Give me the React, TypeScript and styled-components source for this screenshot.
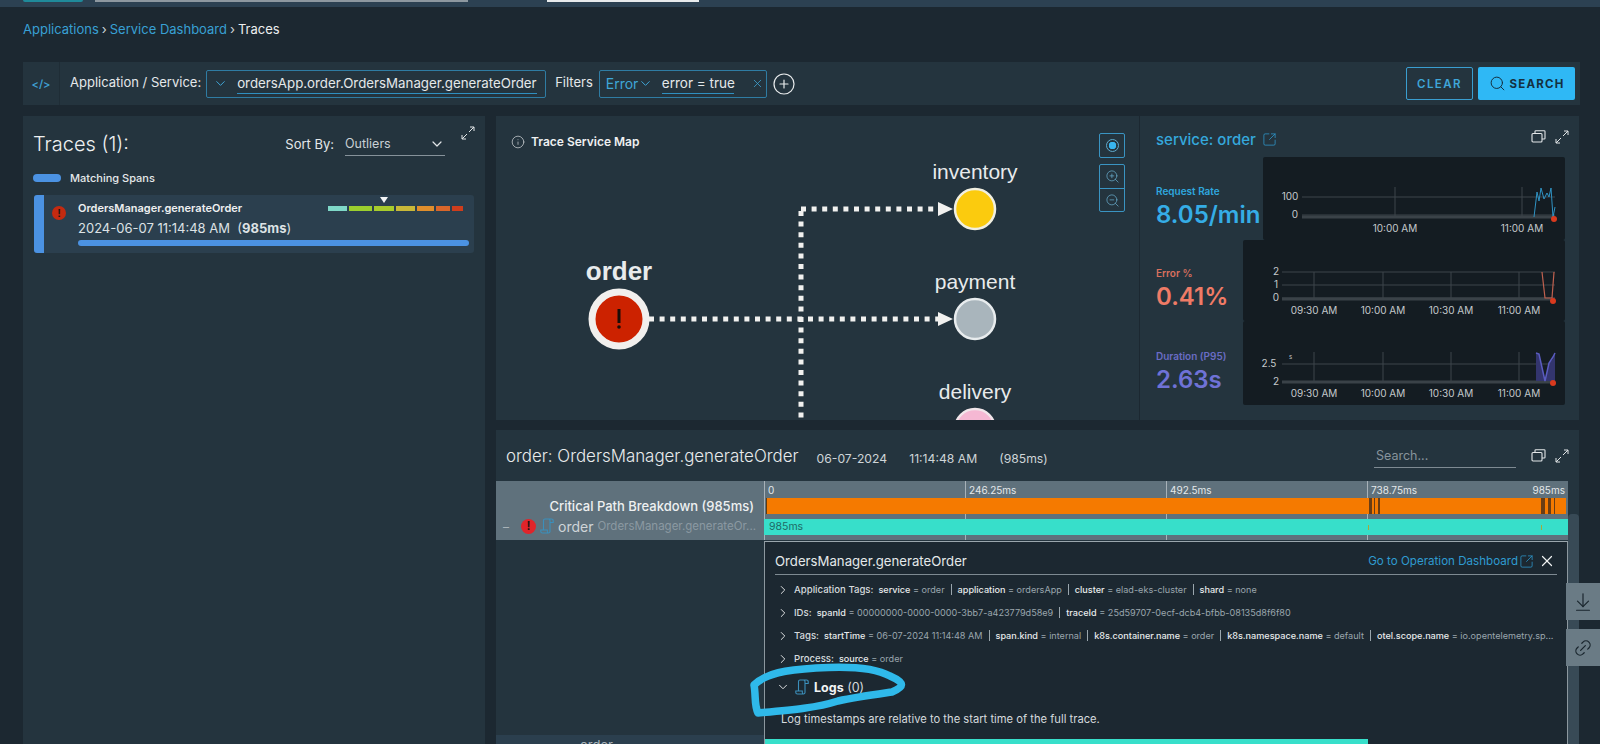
import React from "react";
import styled, { createGlobalStyle } from "styled-components";
import {
  ArrowDownToLine,
  ChevronDown,
  ChevronRight,
  CirclePlus,
  Info,
  Link2,
  Search,
  SquareArrowOutUpRight,
  X,
  ZoomIn,
  ZoomOut,
} from "lucide-react";

const heatSegments = [
  { width: 19, color: "#7fd8c8" },
  { width: 23, color: "#9ccf2e" },
  { width: 20, color: "#a8cc2c" },
  { width: 19, color: "#c9b838" },
  { width: 17, color: "#e08e2c" },
  { width: 14, color: "#d9662a" },
  { width: 11, color: "#cf3d1c" },
];

const detailRows = [
  {
    label: "Application Tags:",
    tags: [
      ["service", "order"],
      ["application", "ordersApp"],
      ["cluster", "elad-eks-cluster"],
      ["shard", "none"],
    ],
  },
  {
    label: "IDs:",
    tags: [
      ["spanId", "00000000-0000-0000-3bb7-a423779d58e9"],
      ["traceId", "25d59707-0ecf-dcb4-bfbb-08135d8f6f80"],
    ],
  },
  {
    label: "Tags:",
    tags: [
      ["startTime", "06-07-2024 11:14:48 AM"],
      ["span.kind", "internal"],
      ["k8s.container.name", "order"],
      ["k8s.namespace.name", "default"],
      ["otel.scope.name", "io.opentelemetry.sp..."],
    ],
  },
  { label: "Process:", tags: [["source", "order"]] },
];

const orangeStripes = [
  { left: 602, width: 3 },
  { left: 607, width: 1 },
  { left: 611, width: 2 },
  { left: 774, width: 4 },
  { left: 781, width: 3 },
  { left: 787, width: 1 },
];

type ChartProps = {
  width: number;
  height: number;
  ticks: { label: string; labelX: number; y: number }[];
  lineFrom: number;
  lineTo: number;
  axisY: number;
  gridTop: number;
  columns: { x: number; label: string }[];
  labelY: number;
  dot: { x: number; y: number };
  children: React.ReactNode;
};

const TimeChart = ({ width, height, ticks, lineFrom, lineTo, axisY, gridTop, columns, labelY, dot, children }: ChartProps) => (
  <ChartBox $width={width} $height={height}>
    <svg width={width} height={height}>
      {columns.map((c) => (
        <g key={c.label}>
          <line x1={c.x} x2={c.x} y1={gridTop} y2={axisY} stroke="#3c454b" />
          <text x={c.x} y={labelY + 4} fill="#c4c9cc" fontSize="10" textAnchor="middle" fontFamily="Inter, sans-serif">
            {c.label}
          </text>
        </g>
      ))}
      {ticks.map((t) => (
        <g key={t.label}>
          <line x1={lineFrom} x2={lineTo} y1={t.y} y2={t.y} stroke="#3c454b" />
          <text x={t.labelX} y={t.y + 3} fill="#c4c9cc" fontSize="10" textAnchor="middle" fontFamily="Inter, sans-serif">
            {t.label}
          </text>
        </g>
      ))}
      <line x1={lineFrom} x2={lineTo} y1={axisY} y2={axisY} stroke="#3a4248" strokeWidth="3" />
      {children}
      <circle cx={dot.x} cy={dot.y} r="3" fill="#d93a1e" />
    </svg>
  </ChartBox>
);

const halfHours = [
  { x: 71, label: "09:30 AM" },
  { x: 140, label: "10:00 AM" },
  { x: 208, label: "10:30 AM" },
  { x: 276, label: "11:00 AM" },
];

const ExpandIcon = () => (
  <svg width="14" height="14" viewBox="0 0 14 14" fill="none" stroke="#e2e6e8" strokeWidth="1">
    <path d="M8 6l5-5M9 1h4v4M6 8l-5 5M1 9v4h4" />
  </svg>
);

const RestoreIcon = () => (
  <svg width="15" height="13" viewBox="0 0 15 13" fill="none" stroke="#e2e6e8" strokeWidth="1.1">
    <rect x="1" y="3.5" width="10" height="8.5" rx="1" />
    <path d="M4 3.5V1.5a.8.8 0 0 1 .8-.8h8.4a.8.8 0 0 1 .8.8v6.7a.8.8 0 0 1-.8.8H11" />
  </svg>
);

const ScrollIcon = () => (
  <svg width="14" height="16" viewBox="0 0 14 16" fill="none" stroke="#3b8fbb" strokeWidth="1.1">
    <path d="M3.5 12V2.5A1.5 1.5 0 0 1 5 1H11.5A1.7 1.7 0 0 1 13.2 2.7V4.5H10M8.3 1A1.7 1.7 0 0 1 10 2.7V13.4A1.6 1.6 0 0 1 8.4 15H2.4A1.6 1.6 0 0 1 .8 13.4V12H7.3V13.4A1.6 1.6 0 0 0 8.4 15" />
  </svg>
);

const ServiceMap = () => (
  <svg width="644" height="304" style={{ display: "block" }}>
    <g fill="none" stroke="#f1f1ef" strokeWidth="5" strokeDasharray="5 5.6">
      <path d="M305 93H444" />
      <path d="M305 95V304" />
      <path d="M153 203H444" />
    </g>
    <path d="M442 86l15 7-15 7z M442 196l15 7-15 7z" fill="#f1f1ef" />
    <circle cx="123" cy="203" r="27" fill="#cc2200" stroke="#f1efed" strokeWidth="7" />
    <path d="M123 193v14" stroke="#1a0d08" strokeWidth="3" />
    <circle cx="123" cy="211" r="1.8" fill="#1a0d08" />
    <circle cx="479" cy="93" r="20" fill="#fbcb0e" stroke="#f1efe0" strokeWidth="2.5" />
    <circle cx="479" cy="203" r="20" fill="#a9b5bc" stroke="#e8ecee" strokeWidth="2.5" />
    <circle cx="479" cy="313" r="20" fill="#f5b8d3" stroke="#f1e6ea" strokeWidth="2.5" />
    <g fontFamily="'Liberation Sans', sans-serif" textAnchor="middle" fill="#e8ebec" fontSize="21">
      <text x="123" y="164" fontSize="26" fontWeight="700">order</text>
      <text x="479" y="63">inventory</text>
      <text x="479" y="173">payment</text>
      <text x="479" y="283">delivery</text>
    </g>
  </svg>
);

const App = () => {
  return (
    <Page>
      <GlobalStyle />
      <TopBar>
        <TopTeal />
        <TopGray />
        <TopOutline />
      </TopBar>
      <Main>
        <Breadcrumb>
          <Crumb>Applications</Crumb>
          <Sep>›</Sep>
          <Crumb>Service Dashboard</Crumb>
          <Sep>›</Sep>
          <CurrentCrumb>Traces</CurrentCrumb>
        </Breadcrumb>

        <FilterBar>
          <CodeCell>&lt;/&gt;</CodeCell>
          <FieldLabel>Application / Service:</FieldLabel>
          <ServiceSelect>
            <ChevronDown size={15} color="#3fa6d8" strokeWidth={1.6} />
            <UnderlinedValue>ordersApp.order.OrdersManager.generateOrder</UnderlinedValue>
          </ServiceSelect>
          <FiltersLabel>Filters</FiltersLabel>
          <FilterChip>
            <ChipKey>
              Error
              <ChevronDown size={15} color="#3fa6d8" strokeWidth={1.6} />
            </ChipKey>
            <ChipValue>error = true</ChipValue>
            <X size={13} color="#3fa6d8" strokeWidth={1.4} />
          </FilterChip>
          <AddFilter>
            <CirclePlus size={24} color="#e8ebec" strokeWidth={1.2} />
          </AddFilter>
          <ClearButton>CLEAR</ClearButton>
          <SearchButton>
            <Search size={17} color="#14303f" strokeWidth={1.4} />
            SEARCH
          </SearchButton>
        </FilterBar>

        <Columns>
          <TracesPanel>
            <TracesHeader>
              <TracesTitle>Traces (1):</TracesTitle>
              <SortLabel>Sort By:</SortLabel>
              <SortSelect>
                Outliers
                <ChevronDown size={16} color="#e2e6e8" strokeWidth={1.8} />
              </SortSelect>
              <ExpandSlot>
                <ExpandIcon />
              </ExpandSlot>
            </TracesHeader>
            <Legend>
              <LegendPill />
              Matching Spans
            </Legend>
            <TraceCard>
              <CardAccent />
              <ErrorDot $size={14} $color="#c42a10">!</ErrorDot>
              <CardBody>
                <CardTop>
                  <SpanName>OrdersManager.generateOrder</SpanName>
                  <HeatStrip>
                    <HeatMarker />
                    {heatSegments.map((s) => (
                      <HeatSegment key={s.color} $width={s.width} $color={s.color} />
                    ))}
                  </HeatStrip>
                </CardTop>
                <SpanTime>
                  2024-06-07 11:14:48 AM&nbsp; (<b>985ms</b>)
                </SpanTime>
                <SpanBar />
              </CardBody>
            </TraceCard>
          </TracesPanel>

          <RightColumn>
            <TopPanel>
              <MapPane>
                <MapTitle>
                  <Info size={14} color="#d5dadd" strokeWidth={1.2} />
                  Trace Service Map
                </MapTitle>
                <MapControls>
                  <ControlGroup>
                    <ControlButton>
                      <CenterRing />
                    </ControlButton>
                  </ControlGroup>
                  <ControlGroup>
                    <ControlButton>
                      <ZoomIn size={15} color="#6db4d6" strokeWidth={1.1} />
                    </ControlButton>
                    <ControlButton>
                      <ZoomOut size={15} color="#6db4d6" strokeWidth={1.1} />
                    </ControlButton>
                  </ControlGroup>
                </MapControls>
                <ServiceMap />
              </MapPane>
              <ServicePane>
                <ServiceHeader>
                  <ServiceName>
                    service: order
                    <SquareArrowOutUpRight size={15} color="#2f9bd0" strokeWidth={1.2} />
                  </ServiceName>
                  <WindowIcons>
                    <RestoreIcon />
                    <ExpandIcon />
                  </WindowIcons>
                </ServiceHeader>
                <MetricRow>
                  <MetricText $top={27}>
                    <MetricLabel $color="#2fa7de">Request Rate</MetricLabel>
                    <MetricValue $color="#35ade6">8.05/min</MetricValue>
                  </MetricText>
                  <TimeChart
                    width={302}
                    height={83}
                    ticks={[{ label: "100", labelX: 27, y: 40 }, { label: "0", labelX: 32, y: 58 }]}
                    lineFrom={39}
                    lineTo={292}
                    axisY={60}
                    gridTop={30}
                    columns={[{ x: 132, label: "10:00 AM" }, { x: 259, label: "11:00 AM" }]}
                    labelY={71}
                    dot={{ x: 291, y: 62 }}
                  >
                    <path
                      d="M271 60L274 35 276 44 278 31 281 42 284 36 286 40 288 31 290 60 292 50"
                      fill="none"
                      stroke="#2f93c4"
                      strokeWidth="1"
                    />
                  </TimeChart>
                </MetricRow>
                <MetricRow>
                  <MetricText $top={26}>
                    <MetricLabel $color="#d9705e">Error %</MetricLabel>
                    <MetricValue $color="#ef7b66">0.41%</MetricValue>
                  </MetricText>
                  <TimeChart
                    width={322}
                    height={81}
                    ticks={[
                      { label: "2", labelX: 33, y: 32 },
                      { label: "1", labelX: 33, y: 45 },
                      { label: "0", labelX: 33, y: 58 },
                    ]}
                    lineFrom={39}
                    lineTo={312}
                    axisY={59}
                    gridTop={32}
                    columns={halfHours}
                    labelY={70}
                    dot={{ x: 310, y: 61 }}
                  >
                    <path d="M299 32L302 58H309L311 32" fill="none" stroke="#c0614f" strokeWidth="1.2" />
                  </TimeChart>
                </MetricRow>
                <MetricRow>
                  <MetricText $top={28}>
                    <MetricLabel $color="#6a6cc4">Duration (P95)</MetricLabel>
                    <MetricValue $color="#6f72d6">2.63s</MetricValue>
                  </MetricText>
                  <TimeChart
                    width={322}
                    height={84}
                    ticks={[{ label: "2.5", labelX: 26, y: 43 }]}
                    lineFrom={39}
                    lineTo={312}
                    axisY={61}
                    gridTop={31}
                    columns={halfHours}
                    labelY={72}
                    dot={{ x: 310, y: 62 }}
                  >
                    <text x="33" y="64" fill="#c4c9cc" fontSize="10" textAnchor="middle" fontFamily="Inter, sans-serif">2</text>
                    <text x="46" y="38" fill="#c4c9cc" fontSize="6" fontFamily="Inter, sans-serif">s</text>
                    <path d="M293 32L296 33 302 60 306 42 310 38 312 31V60H293z" fill="#33356e" />
                    <path d="M293 32L296 33 302 60 306 42 310 36 312 32" fill="none" stroke="#5a5cc0" strokeWidth="1.5" />
                  </TimeChart>
                </MetricRow>
              </ServicePane>
            </TopPanel>

            <BottomPanel>
              <SpanHeader>
                <SpanTitle>order: OrdersManager.generateOrder</SpanTitle>
                <SpanStamp $gap={18}>06-07-2024</SpanStamp>
                <SpanStamp $gap={22}>11:14:48 AM</SpanStamp>
                <SpanStamp $gap={22}>(985ms)</SpanStamp>
                <SpanSearch>Search...</SpanSearch>
                <WindowIcons>
                  <RestoreIcon />
                  <ExpandIcon />
                </WindowIcons>
              </SpanHeader>

              <TableWrap>
                <SpanTable>
                  <OverviewLabels>
                    <CriticalLabel>Critical Path Breakdown (985ms)</CriticalLabel>
                    <ServiceRow>
                      <Dash>–</Dash>
                      <ErrorDot $size={15} $color="#e0242a">!</ErrorDot>
                      <ScrollIcon />
                      <RowService>order</RowService>
                      <RowOperation>OrdersManager.generateOr...</RowOperation>
                    </ServiceRow>
                  </OverviewLabels>

                  <Timeline>
                    <Ruler>
                      <RulerCell>0</RulerCell>
                      <RulerCell>246.25ms</RulerCell>
                      <RulerCell>492.5ms</RulerCell>
                      <RulerCell>
                        <span>738.75ms</span>
                        <span>985ms</span>
                      </RulerCell>
                    </Ruler>
                    <OrangeBar>
                      {orangeStripes.map((s) => (
                        <OrangeStripe key={s.left} style={{ left: s.left, width: s.width }} />
                      ))}
                    </OrangeBar>
                    <TealBar>
                      985ms
                      <TealMark $left={604} />
                      <TealMark $left={777} />
                    </TealBar>
                  </Timeline>

                  <TreeGap />

                  <DetailPanel>
                    <DetailHeader>
                      <DetailTitle>OrdersManager.generateOrder</DetailTitle>
                      <OperationLink>
                        Go to Operation Dashboard
                        <SquareArrowOutUpRight size={15} color="#2f9bd0" strokeWidth={1.2} />
                      </OperationLink>
                      <X size={18} color="#f0f2f3" strokeWidth={1.6} />
                    </DetailHeader>
                    {detailRows.map((row) => (
                      <TagRow key={row.label}>
                        <ChevronRight size={14} color="#e8ebec" strokeWidth={1.6} />
                        <TagLabel>{row.label}</TagLabel>
                        {row.tags.map(([k, v], i) => (
                          <TagItem key={k} $first={i === 0}>
                            <b>{k}</b> = <span>{v}</span>
                          </TagItem>
                        ))}
                      </TagRow>
                    ))}
                    <LogsRow>
                      <ChevronDown size={14} color="#e8ebec" strokeWidth={1.6} />
                      <ScrollIcon />
                      <LogsTitle>
                        <b>Logs</b> (0)
                      </LogsTitle>
                    </LogsRow>
                    <LogNote>Log timestamps are relative to the start time of the full trace.</LogNote>
                    <Scribble width="170" height="60" viewBox="0 0 170 60" fill="none">
                      <path
                        d="M8 24C20 12 40 9 70 7C100 5 128 6 144 15C160 22 158 26 146 31C125 34 110 36 92 40C70 47 45 49 12 52C8 44 10 34 8 24Z"
                        stroke="#2fb9ea"
                        strokeWidth="7.5"
                        strokeLinejoin="round"
                      />
                    </Scribble>
                  </DetailPanel>

                  <NextLabel>
                    <NextText>order</NextText>
                  </NextLabel>
                  <NextTrack>
                    <NextBar />
                  </NextTrack>
                </SpanTable>
                <ScrollGutter>
                  <ScrollThumb />
                </ScrollGutter>
              </TableWrap>
            </BottomPanel>
          </RightColumn>
        </Columns>
      </Main>

      <SideButton $top={583}>
        <ArrowDownToLine size={22} color="#1a262e" strokeWidth={1.3} />
      </SideButton>
      <SideButton $top={629}>
        <Link2 size={20} color="#1a262e" strokeWidth={1.5} style={{ transform: "rotate(-45deg)" }} />
      </SideButton>
    </Page>
  );
};

const GlobalStyle = createGlobalStyle`
  html, body {
    margin: 0;
    padding: 0;
    background: #1c2831;
  }
  * {
    box-sizing: border-box;
  }
  svg {
    flex: none;
  }
`;

const Page = styled.div`
  position: relative;
  width: 1600px;
  height: 744px;
  overflow: hidden;
  background: #1c2831;
  color: #e4e8ea;
  font-family: Inter, "Noto Sans", sans-serif;
`;

const TopBar = styled.div`
  height: 7px;
  background: #2c4152;
  display: flex;
  padding-left: 23px;
`;

const TopTeal = styled.div`
  width: 60px;
  height: 2px;
  background: #1f8a9a;
  border-radius: 0 0 2px 2px;
`;

const TopGray = styled.div`
  width: 373px;
  height: 2px;
  margin-left: 12px;
  background: #8d98a0;
`;

const TopOutline = styled.div`
  width: 152px;
  height: 2px;
  margin-left: 79px;
  background: #e8ebec;
`;

const Main = styled.div`
  padding: 0 21px 0 23px;
`;

const Breadcrumb = styled.div`
  height: 55px;
  padding-bottom: 11px;
  display: flex;
  align-items: center;
  gap: 3px;
  font-size: 13px;
`;

const Crumb = styled.span`
  color: #38a0d4;
`;

const Sep = styled.span`
  color: #cfd5d8;
`;

const CurrentCrumb = styled.span`
  color: #eceff0;
`;

const FilterBar = styled.div`
  height: 43px;
  margin-right: -1px;
  background: #24343e;
  display: flex;
  align-items: center;
  padding-right: 5px;
`;

const CodeCell = styled.div`
  width: 37px;
  height: 100%;
  border-right: 1px solid #1f2d36;
  display: flex;
  align-items: center;
  justify-content: center;
  color: #3f9fd0;
  font-size: 11px;
  font-weight: 600;
`;

const FieldLabel = styled.span`
  margin-left: 10px;
  font-size: 13px;
  margin-bottom: 4px;
`;

const ServiceSelect = styled.div`
  flex: none;
  width: 340px;
  height: 28px;
  margin-left: 5px;
  border: 1px solid #2f7ca3;
  border-radius: 2px;
  display: flex;
  align-items: center;
  gap: 9px;
  padding-left: 6px;
`;

const UnderlinedValue = styled.span`
  font-size: 13.3px;
  line-height: 19px;
  border-bottom: 1px solid #2f8fc0;
  white-space: nowrap;
`;

const FiltersLabel = styled.span`
  margin-left: 9px;
  font-size: 13px;
  margin-bottom: 4px;
`;

const FilterChip = styled.div`
  flex: none;
  width: 168px;
  height: 28px;
  margin-left: 6px;
  border: 1px solid #2f7ca3;
  border-radius: 2px;
  display: flex;
  align-items: center;
  padding-left: 6px;
`;

const ChipKey = styled.span`
  width: 56px;
  display: flex;
  align-items: center;
  color: #3fa6d8;
  font-size: 14px;
`;

const ChipValue = styled.span`
  width: 72px;
  margin-right: 17px;
  font-size: 13.5px;
  line-height: 19px;
  white-space: nowrap;
  border-bottom: 1px solid #2f8fc0;
`;

const AddFilter = styled.span`
  margin-left: 5px;
  display: flex;
`;

const ClearButton = styled.button`
  width: 67px;
  height: 33px;
  margin-left: auto;
  background: transparent;
  border: 1px solid #3a9ed0;
  border-radius: 2px;
  color: #3fa6d8;
  font-family: inherit;
  font-size: 11.5px;
  font-weight: 600;
  letter-spacing: 1.4px;
`;

const SearchButton = styled.button`
  width: 97px;
  height: 33px;
  margin-left: 5px;
  background: #2fb8f5;
  border: none;
  border-radius: 2px;
  color: #14303f;
  font-family: inherit;
  font-size: 11.5px;
  font-weight: 700;
  letter-spacing: 1.2px;
  display: flex;
  align-items: center;
  justify-content: center;
  gap: 4px;
`;

const Columns = styled.div`
  display: grid;
  grid-template-columns: 462px 1083px;
  gap: 11px;
  margin-top: 11px;
`;

const TracesPanel = styled.div`
  height: 628px;
  padding: 0 11px 0 10px;
  background: #24343e;
`;

const TracesHeader = styled.div`
  height: 56px;
  display: flex;
  align-items: center;
`;

const TracesTitle = styled.h2`
  margin: 0;
  font-size: 20px;
  font-weight: 300;
  color: #eef0f1;
`;

const SortLabel = styled.span`
  margin-left: auto;
  font-size: 13px;
`;

const SortSelect = styled.div`
  width: 100px;
  height: 24px;
  margin-left: 11px;
  margin-right: 16px;
  border-bottom: 1px solid #86929a;
  display: flex;
  align-items: center;
  justify-content: space-between;
  font-size: 12.5px;
  color: #c9d0d4;
`;

const ExpandSlot = styled.span`
  align-self: flex-start;
  margin-top: 10px;
  margin-right: -1px;
  display: flex;
`;

const Legend = styled.div`
  height: 12px;
  display: flex;
  align-items: center;
  gap: 9px;
  font-size: 11px;
  font-weight: 500;
`;

const LegendPill = styled.span`
  width: 28px;
  height: 8px;
  border-radius: 4px;
  background: #4b92e2;
`;

const TraceCard = styled.div`
  height: 58px;
  margin: 11px 0 0 1px;
  background: #2b3f4e;
  border-radius: 3px;
  display: flex;
`;

const CardAccent = styled.div`
  width: 10px;
  background: #4b92e2;
  border-radius: 3px 0 0 3px;
`;

const ErrorDot = styled.span<{ $size: number; $color: string }>`
  flex: none;
  width: ${(props) => props.$size}px;
  height: ${(props) => props.$size}px;
  border-radius: 50%;
  background: ${(props) => props.$color};
  color: #1c1512;
  font-family: "Liberation Sans", sans-serif;
  font-size: ${(props) => props.$size - 3}px;
  font-weight: 700;
  line-height: ${(props) => props.$size}px;
  text-align: center;
  ${TraceCard} & {
    margin: 11px 12px 0 8px;
  }
`;

const CardBody = styled.div`
  flex: 1;
  padding: 6px 5px 0 0;
`;

const CardTop = styled.div`
  height: 14px;
  padding-right: 6px;
  display: flex;
  align-items: center;
  justify-content: space-between;
`;

const SpanName = styled.span`
  font-size: 11px;
  font-weight: 600;
  color: #eef0f1;
`;

const HeatStrip = styled.div`
  position: relative;
  display: flex;
  gap: 2px;
`;

const HeatSegment = styled.span<{ $width: number; $color: string }>`
  width: ${(props) => props.$width}px;
  height: 5px;
  background: ${(props) => props.$color};
`;

const HeatMarker = styled.span`
  position: absolute;
  left: 52px;
  top: -9px;
  border-left: 4px solid transparent;
  border-right: 4px solid transparent;
  border-top: 6px solid #f2f4f5;
`;

const SpanTime = styled.div`
  height: 18px;
  margin-top: 4px;
  font-size: 13px;
  line-height: 18px;
  color: #dde2e5;
  b {
    font-weight: 700;
  }
`;

const SpanBar = styled.div`
  height: 6px;
  margin-top: 3px;
  border-radius: 3px;
  background: #4b92e2;
`;

const RightColumn = styled.div`
  display: flex;
  flex-direction: column;
  gap: 10px;
`;

const TopPanel = styled.div`
  height: 304px;
  background: #24343e;
  display: flex;
  overflow: hidden;
`;

const MapPane = styled.div`
  position: relative;
  width: 644px;
  flex: none;
  border-right: 1px solid #1c2831;
`;

const MapTitle = styled.div`
  position: absolute;
  left: 15px;
  top: 18px;
  display: flex;
  align-items: center;
  gap: 6px;
  font-size: 12px;
  font-weight: 600;
  color: #eef0f1;
`;

const MapControls = styled.div`
  position: absolute;
  left: 603px;
  top: 17px;
  display: flex;
  flex-direction: column;
  gap: 6px;
`;

const ControlGroup = styled.div`
  width: 26px;
  border: 1px solid #3a94c2;
  border-radius: 2px;
`;

const ControlButton = styled.div`
  height: 23px;
  display: flex;
  align-items: center;
  justify-content: center;
  & + & {
    border-top: 1px solid #3a94c2;
  }
`;

const CenterRing = styled.span`
  width: 13px;
  height: 13px;
  border: 1px solid #5fa9cc;
  border-radius: 50%;
  background: radial-gradient(circle, #38b4ee 0 3.5px, transparent 4px);
`;

const ServicePane = styled.div`
  flex: 1;
  padding: 0 10px 0 16px;
`;

const ServiceHeader = styled.div`
  height: 41px;
  padding-top: 14px;
  display: flex;
  justify-content: space-between;
`;

const ServiceName = styled.div`
  height: 18px;
  display: flex;
  align-items: center;
  gap: 6px;
  color: #35a8dc;
  font-size: 15px;
  font-weight: 500;
`;

const WindowIcons = styled.div`
  display: flex;
  align-items: center;
  gap: 9px;
  height: 13px;
`;

const MetricRow = styled.div`
  display: flex;
  justify-content: space-between;
  margin-right: 4px;
`;

const MetricText = styled.div<{ $top: number }>`
  padding-top: ${(props) => props.$top}px;
  white-space: nowrap;
`;

const MetricLabel = styled.div<{ $color: string }>`
  height: 14px;
  font-size: 10px;
  line-height: 14px;
  font-weight: 600;
  color: ${(props) => props.$color};
`;

const MetricValue = styled.div<{ $color: string }>`
  font-size: 24px;
  line-height: 33px;
  font-weight: 600;
  color: ${(props) => props.$color};
`;

const ChartBox = styled.div<{ $width: number; $height: number }>`
  flex: none;
  width: ${(props) => props.$width}px;
  height: ${(props) => props.$height}px;
  background: #141c22;
  border-radius: 2px;
  svg {
    display: block;
  }
`;

const BottomPanel = styled.div`
  height: 314px;
  background: #24343e;
  overflow: hidden;
`;

const SpanHeader = styled.div`
  height: 51px;
  padding: 0 10px;
  display: flex;
  align-items: center;
`;

const SpanTitle = styled.span`
  font-size: 16.9px;
  font-weight: 300;
  color: #e8ebec;
`;

const SpanStamp = styled.span<{ $gap: number }>`
  margin: 5px 0 0 ${(props) => props.$gap}px;
  font-size: 12.2px;
  color: #cfd5d8;
`;

const SpanSearch = styled.div`
  width: 142px;
  height: 24px;
  margin: 0 15px 0 auto;
  border-bottom: 1px solid #7e8a92;
  font-size: 12.5px;
  line-height: 24px;
  color: #87939b;
  padding-left: 2px;
`;

const TableWrap = styled.div`
  display: flex;
`;

const SpanTable = styled.div`
  width: 1072px;
  flex: none;
  display: grid;
  grid-template-columns: 268px 804px;
  grid-template-rows: 59px 195px 9px;
`;

const OverviewLabels = styled.div`
  background: #5f717c;
  padding-top: 16px;
`;

const CriticalLabel = styled.div`
  height: 18px;
  padding-right: 10px;
  text-align: right;
  font-size: 13px;
  line-height: 18px;
  font-weight: 500;
  color: #eef0f1;
`;

const ServiceRow = styled.div`
  height: 18px;
  margin-top: 2px;
  padding-left: 7px;
  display: flex;
  align-items: center;
  white-space: nowrap;
  gap: 4px;
`;

const Dash = styled.span`
  width: 13px;
  margin-right: 1px;
  color: #a9b3b9;
  font-size: 12px;
`;

const RowService = styled.span`
  font-size: 14px;
  color: #cfd5d8;
`;

const RowOperation = styled.span`
  font-size: 11.5px;
  color: #8b99a2;
`;

const Timeline = styled.div`
  background-color: #5f717c;
  background-image: linear-gradient(to right, #a7b1b8 1px, transparent 1px);
  background-size: 25% 100%;
`;

const Ruler = styled.div`
  height: 17px;
  display: grid;
  grid-template-columns: repeat(4, 1fr);
`;

const RulerCell = styled.div`
  padding: 3px 3px 0 4px;
  display: flex;
  justify-content: space-between;
  font-size: 10px;
  line-height: 13px;
  color: #e4e8ea;
`;

const OrangeBar = styled.div`
  position: relative;
  height: 16px;
  margin-left: 2px;
  width: 800px;
  background: #f57a00;
  border-left: 1px solid #5f3a12;
`;

const OrangeStripe = styled.span`
  position: absolute;
  top: 0;
  bottom: 0;
  background: #6a3d14;
`;

const TealBar = styled.div`
  position: relative;
  height: 16px;
  margin-top: 5px;
  padding-left: 5px;
  background: #37dfca;
  font-size: 10.5px;
  line-height: 16px;
  color: #1f6a66;
`;

const TealMark = styled.span<{ $left: number }>`
  position: absolute;
  left: ${(props) => props.$left}px;
  top: 6px;
  width: 1px;
  height: 5px;
  background: #a8a83a;
`;

const TreeGap = styled.div`
  background: #24343e;
`;

const DetailPanel = styled.div`
  position: relative;
  margin-top: 1px;
  padding: 0 10px 0 10px;
  background: #1c2831;
  border-top: 1px solid #9aa6ad;
  border-left: 1px solid #8c989f;
  border-right: 1px solid #8c989f;
`;

const DetailHeader = styled.div`
  height: 33px;
  padding: 6px 1px 0 0;
  border-bottom: 1px solid #7e8a92;
  display: flex;
  align-items: center;
`;

const DetailTitle = styled.span`
  font-size: 13.2px;
  color: #e4e8ea;
`;

const OperationLink = styled.span`
  margin-left: auto;
  margin-right: 4px;
  display: flex;
  align-items: center;
  gap: 1px;
  font-size: 11.6px;
  color: #2f9bd0;
`;

const TagRow = styled.div`
  height: 23px;
  padding-left: 1px;
  display: flex;
  align-items: center;
  font-size: 9.6px;
  white-space: nowrap;
  color: #9aa6ad;
  &:nth-of-type(2) {
    margin-top: 3px;
  }
  & > svg {
    margin-right: 4px;
  }
`;

const TagLabel = styled.span`
  margin-right: 5px;
  color: #d5dadd;
  font-weight: 500;
`;

const TagItem = styled.span<{ $first: boolean }>`
  font-size: 9.1px;
  ${(props) =>
    props.$first
      ? ""
      : `
    margin-left: 6px;
    padding-left: 6px;
    border-left: 1px solid #9aa6ad;
  `}
  b {
    font-weight: 500;
    color: #e8ebec;
  }
`;

const LogsRow = styled.div`
  height: 32px;
  margin-top: 1px;
  padding-left: 1px;
  display: flex;
  align-items: center;
  gap: 5px;
`;

const LogsTitle = styled.span`
  font-size: 12.5px;
  color: #d5dadd;
  b {
    font-weight: 700;
    color: #f2f4f5;
  }
`;

const LogNote = styled.div`
  height: 18px;
  margin-top: 7px;
  padding-left: 6px;
  font-size: 11.2px;
  line-height: 18px;
  color: #d5dadd;
`;

const Scribble = styled.svg`
  position: absolute;
  left: -19px;
  top: 119px;
`;

const NextLabel = styled.div`
  background: #2b3f4e;
  overflow: hidden;
  padding-left: 84px;
`;

const NextText = styled.div`
  margin-top: 3px;
  font-size: 13px;
  line-height: 14px;
  color: #a9b3b9;
`;

const NextTrack = styled.div`
  padding-top: 4px;
  background: #1c2831;
  border-left: 1px solid #8c989f;
  border-right: 1px solid #8c989f;
`;

const NextBar = styled.div`
  width: 603px;
  height: 5px;
  background: #37dfca;
`;

const ScrollGutter = styled.div`
  flex: 1;
  padding-top: 33px;
`;

const ScrollThumb = styled.div`
  height: 230px;
  border-radius: 4px 4px 0 0;
  background: #384a56;
`;

const SideButton = styled.div<{ $top: number }>`
  position: absolute;
  left: 1566px;
  top: ${(props) => props.$top}px;
  width: 34px;
  height: 37px;
  background: #6a7b85;
  display: flex;
  align-items: center;
  justify-content: center;
`;

export default App;
